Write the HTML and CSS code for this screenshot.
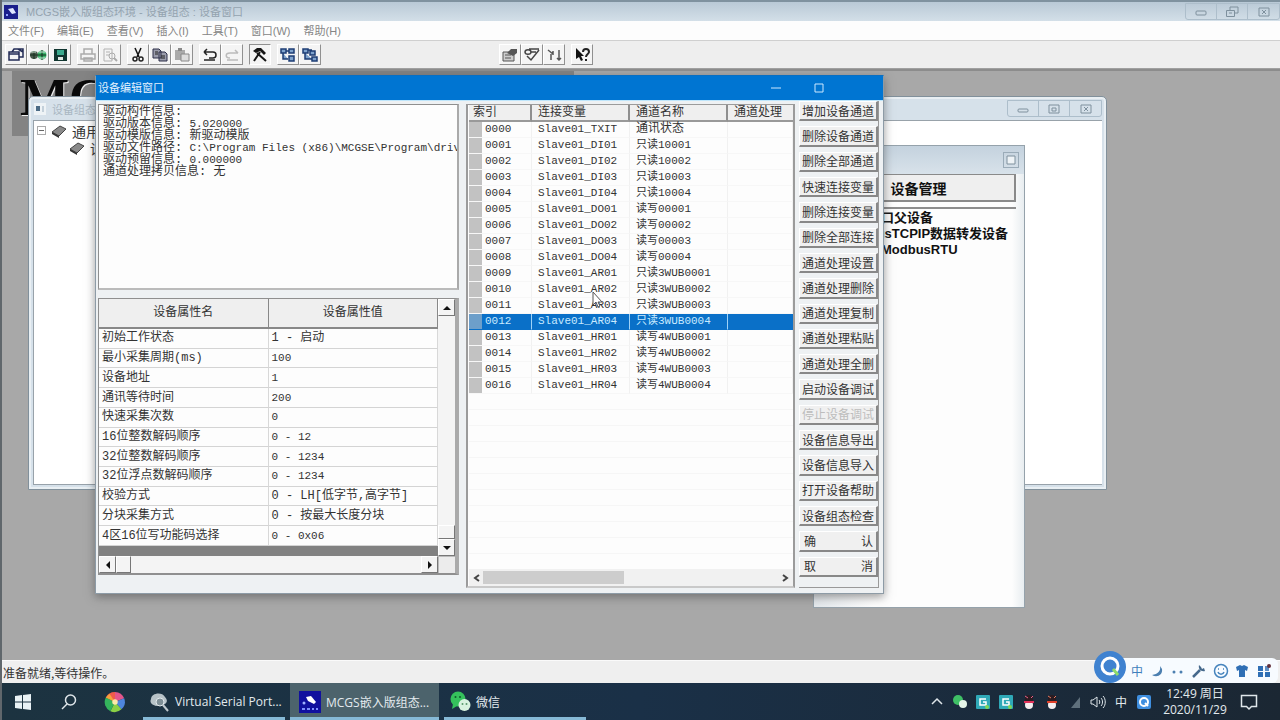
FILE: index.html
```html
<!DOCTYPE html>
<html lang="zh-CN">
<head>
<meta charset="utf-8">
<title>MCGS嵌入版组态环境</title>
<link rel="stylesheet" href="styles.css">
</head>
<body>
<div class="app">
  <header class="app-title">
    <svg class="app-logo" viewBox="0 0 14 14"><rect width="14" height="14" fill="#1a1f8c"/><path d="M4 4l5-1 3 5-4 1z" fill="#dfe6ff"/><rect x="2" y="9" width="2" height="2" fill="#8fa0ff"/></svg>
    <h1>MCGS嵌入版组态环境 - 设备组态 : 设备窗口</h1>
    <div class="caption-buttons">
      <button aria-label="最小化"><svg viewBox="0 0 14 12"><rect x="2" y="5" width="10" height="4" rx="1"/></svg></button>
      <button aria-label="还原"><svg viewBox="0 0 14 12"><path d="M5 4V1h8v6h-3M1.500 4.500h8v6h-8zM4 7h3"/></svg></button>
      <button aria-label="关闭"><svg viewBox="0 0 14 12"><path d="M2 2h10v8H2zM5 4l4 4M9 4L5 8"/></svg></button>
    </div>
  </header>

  <nav class="menu">
    <button>文件(F)</button><button>编辑(E)</button><button>查看(V)</button><button>插入(I)</button><button>工具(T)</button><button>窗口(W)</button><button>帮助(H)</button>
  </nav>

  <div class="toolbar">
    <div class="tool-group">
      <button aria-label="窗口"><svg viewBox="0 0 18 16"><path d="M2 5h10v8H2zM2 7h10M5 5l2-3h9v8h-4M11 2l5 3" fill="none" stroke="#222b55" stroke-width="1.500"/></svg></button>
      <button aria-label="下载"><svg viewBox="0 0 18 16"><circle cx="5" cy="8" r="4" fill="#4a5a4c"/><circle cx="13" cy="8" r="4.500" fill="#39b36a"/><path d="M1 8h16M5 4v8M13 3v10" stroke="#16301e"/><path d="M2 5h5M10 5h6M10 11h6" stroke="#d3eadb"/></svg></button>
      <button aria-label="保存"><svg viewBox="0 0 18 16"><path d="M3 2h13v12H3z" fill="#10352f"/><path d="M6 3h7v5H6z" fill="#3aa98d"/><path d="M7 10h5v3H7z" fill="#dfe8e4"/></svg></button>
    </div>
    <div class="tool-group">
      <button class="dim" aria-label="打印"><svg viewBox="0 0 18 16"><path d="M5 7V2h8v5M2 7h14v5H2zM5 11h8v3H5z" fill="none" stroke="#aaa" stroke-width="1.500"/></svg></button>
      <button class="dim" aria-label="预览"><svg viewBox="0 0 18 16"><path d="M3 2h8v12H3zM5 5h4M5 8h3" fill="none" stroke="#b2b2b2"/><circle cx="11" cy="9" r="3" fill="none" stroke="#aaa"/><path d="M13 11l3 3" stroke="#aaa" stroke-width="2"/></svg></button>
    </div>
    <div class="tool-group">
      <button aria-label="剪切"><svg viewBox="0 0 18 16"><path d="M6 1l4 9M12 1L8 10" stroke="#111" stroke-width="1.500"/><circle cx="6" cy="12" r="2" fill="none" stroke="#222" stroke-width="1.500"/><circle cx="12" cy="12" r="2" fill="none" stroke="#222" stroke-width="1.500"/></svg></button>
      <button aria-label="复制"><svg viewBox="0 0 18 16"><path d="M2 2h6l2 2v7H2zM8 5h6l2 2v7H8z" fill="#9a9cab" stroke="#2c2f48"/><path d="M4 5h3M4 7h3M10 9h4M10 11h4" stroke="#222"/></svg></button>
      <button class="dim" aria-label="粘贴"><svg viewBox="0 0 18 16"><path d="M2 3h10v10H2z" fill="#aaa"/><path d="M5 1h4v3H5z" fill="#888"/><path d="M8 7h8v7H8z" fill="#ddd" stroke="#888"/></svg></button>
    </div>
    <div class="tool-group">
      <button aria-label="撤消"><svg viewBox="0 0 18 16"><path d="M3 5h9c4 0 4 6 0 6H8M3 5l3-3M3 5l3 3M3 13h11" fill="none" stroke="#222" stroke-width="1.500"/></svg></button>
      <button class="dim" aria-label="重复"><svg viewBox="0 0 18 16"><path d="M15 6H7c-5 0-5 5 0 5M15 6l-3-3M4 13h11" fill="none" stroke="#bbb" stroke-width="1.500"/></svg></button>
    </div>
    <div class="tool-group">
      <button class="pressed" aria-label="工作台"><svg viewBox="0 0 18 16"><path d="M2 4l4-3h4l5 5-2 2-4-4-4 2z" fill="#151515"/><path d="M9 5L3 14M6 6l9 8" stroke="#151515" stroke-width="2"/></svg></button>
    </div>
    <div class="tool-group">
      <button aria-label="上移"><svg viewBox="0 0 18 16"><path d="M2 2h5v4H2zM10 2h5v4h-5zM10 9h5v5h-5zM4 6v6h5M7 4h3" fill="#7fa3cd" stroke="#1c3c74" stroke-width="1.500"/></svg></button>
      <button aria-label="下移"><svg viewBox="0 0 18 16"><path d="M2 2h5v4H2zM9 4h5v4H9zM11 10h5v4h-5zM4 6v6h7M7 3h4" fill="#7fa3cd" stroke="#1c3c74" stroke-width="1.500"/></svg></button>
    </div>
    <div class="tool-group tool-group-far">
      <button aria-label="属性"><svg viewBox="0 0 18 16"><path d="M2 5h11v9H2zM4 8h6M4 11h6" fill="#ccc" stroke="#555"/><path d="M6 6l4-4h6v4l-4 3z" fill="#555"/></svg></button>
      <button aria-label="检查"><svg viewBox="0 0 18 16"><path d="M2 5c0-3 6-3 6 0s-6 3-6 0M6 2h10M8 5h5M4 9l4 4 8-10" fill="none" stroke="#444" stroke-width="1.500"/></svg></button>
      <button aria-label="排序"><svg viewBox="0 0 18 16"><path d="M3 3l5 4M6 7v6M8 4v4M14 3v10M12 11l2 2 2-2" fill="none" stroke="#555" stroke-width="1.500"/></svg></button>
    </div>
    <div class="tool-group">
      <button aria-label="帮助"><svg viewBox="0 0 18 16"><path d="M3 1v11l3-2 2 4 2-1-2-4h3z" fill="#111"/><path d="M10 5c0-4 6-4 6 0 0 2-3 2-3 5M13 12v2" fill="none" stroke="#222" stroke-width="2"/></svg></button>
    </div>
  </div>

  <main class="workspace">
    <div class="banner">MCGS</div>

    <section class="child-window">
      <div class="child-title">
        <svg viewBox="0 0 12 12"><rect width="12" height="12" fill="#eef3f6"/><path d="M2 3h4v5H2z" fill="#4c6b85"/><path d="M8 3h2v6H8z" fill="#c3d0da"/></svg>
        <span>设备组态 : 设备窗口</span>
        <div class="caption-buttons">
          <button aria-label="最小化"><svg viewBox="0 0 14 12"><rect x="2" y="6" width="10" height="3" rx="1"/></svg></button>
          <button aria-label="最大化"><svg viewBox="0 0 14 12"><path d="M2 2h10v8H2zM5 5h4v3H5z"/></svg></button>
          <button aria-label="关闭"><svg viewBox="0 0 14 12"><path d="M2 2h10v8H2zM5 4l4 4M9 4L5 8"/></svg></button>
        </div>
      </div>
      <ul class="tree">
        <li><i class="expander"></i><svg viewBox="0 0 16 14"><path d="M1 8l8-6 6 3-7 7z" fill="#8a8a8a" stroke="#444"/><path d="M1 8l7 4v2L1 10z" fill="#333"/></svg>通用串口父设备</li>
        <li class="tree-child"><svg viewBox="0 0 16 14"><path d="M1 8l8-6 6 3-7 7z" fill="#8a8a8a" stroke="#444"/><path d="M1 8l7 4v2L1 10z" fill="#333"/></svg>设备0</li>
      </ul>
    </section>

    <section class="toolbox">
      <div class="toolbox-title"><button aria-label="关闭"><svg viewBox="0 0 14 14"><path d="M3 3h8v8H3z" fill="#eef3f6" stroke="#7e909d"/></svg></button></div>
      <button class="manage">设备管理</button>
      <ul class="devices"><li>通用串口父设备</li><li>ModbusTCPIP数据转发设备</li><li>莫迪康ModbusRTU</li></ul>
    </section>

    <section class="dialog">
      <div class="dialog-title">
        <h2>设备编辑窗口</h2>
        <button aria-label="最小化"><svg viewBox="0 0 12 12"><path d="M1 6h10"/></svg></button>
        <button aria-label="最大化"><svg viewBox="0 0 12 12"><path d="M2 2h8v8H2z"/></svg></button>
        <button class="close" aria-label="关闭"></button>
      </div>
      <div class="dialog-body">
        <div class="left">
          <div class="info">
            <p>驱动构件信息:</p>
            <p>驱动版本信息: <span class="mono">5.020000</span></p>
            <p>驱动模版信息: 新驱动模版</p>
            <p>驱动文件路径: <span class="mono">C:\Program Files (x86)\MCGSE\Program\driv</span></p>
            <p>驱动预留信息: <span class="mono">0.000000</span></p>
            <p>通道处理拷贝信息: 无</p>
          </div>
          <div class="props">
            <div class="props-view">
              <table class="props-table">
                <thead><tr><th>设备属性名</th><th>设备属性值</th></tr></thead>
                <tbody>
                  <tr><td>初始工作状态</td><td>1 - 启动</td></tr>
                  <tr><td>最小采集周期(ms)</td><td class="mono">100</td></tr>
                  <tr><td>设备地址</td><td class="mono">1</td></tr>
                  <tr><td>通讯等待时间</td><td class="mono">200</td></tr>
                  <tr><td>快速采集次数</td><td class="mono">0</td></tr>
                  <tr><td>16位整数解码顺序</td><td class="mono">0 - 12</td></tr>
                  <tr><td>32位整数解码顺序</td><td class="mono">0 - 1234</td></tr>
                  <tr><td>32位浮点数解码顺序</td><td class="mono">0 - 1234</td></tr>
                  <tr><td>校验方式</td><td>0 - LH[低字节,高字节]</td></tr>
                  <tr><td>分块采集方式</td><td>0 - 按最大长度分块</td></tr>
                  <tr><td>4区16位写功能码选择</td><td class="mono">0 - 0x06</td></tr>
                </tbody>
              </table>
            </div>
            <div class="vscroll">
              <button aria-label="向上"><svg viewBox="0 0 8 8"><path d="M0 6h8L4 2z"/></svg></button>
              <i class="vthumb"></i>
              <button aria-label="向下"><svg viewBox="0 0 8 8"><path d="M0 2h8L4 6z"/></svg></button>
            </div>
            <div class="hscroll">
              <button aria-label="向左"><svg viewBox="0 0 8 8"><path d="M6 0v8L2 4z"/></svg></button>
              <i class="hthumb"></i>
              <button aria-label="向右"><svg viewBox="0 0 8 8"><path d="M2 0v8l4-4z"/></svg></button>
            </div>
            <i class="corner"></i>
          </div>
        </div>

        <div class="channels">
          <table class="channel-table">
            <thead><tr><th class="c1">索引</th><th class="c2">连接变量</th><th class="c3">通道名称</th><th>通道处理</th></tr></thead>
            <tbody>
              <tr><td>0000</td><td>Slave01_TXIT</td><td class="zh">通讯状态</td><td></td></tr>
              <tr><td>0001</td><td>Slave01_DI01</td><td>只读10001</td><td></td></tr>
              <tr><td>0002</td><td>Slave01_DI02</td><td>只读10002</td><td></td></tr>
              <tr><td>0003</td><td>Slave01_DI03</td><td>只读10003</td><td></td></tr>
              <tr><td>0004</td><td>Slave01_DI04</td><td>只读10004</td><td></td></tr>
              <tr><td>0005</td><td>Slave01_DO01</td><td>读写00001</td><td></td></tr>
              <tr><td>0006</td><td>Slave01_DO02</td><td>读写00002</td><td></td></tr>
              <tr><td>0007</td><td>Slave01_DO03</td><td>读写00003</td><td></td></tr>
              <tr><td>0008</td><td>Slave01_DO04</td><td>读写00004</td><td></td></tr>
              <tr><td>0009</td><td>Slave01_AR01</td><td>只读3WUB0001</td><td></td></tr>
              <tr><td>0010</td><td>Slave01_AR02</td><td>只读3WUB0002</td><td></td></tr>
              <tr><td>0011</td><td>Slave01_AR03</td><td>只读3WUB0003</td><td></td></tr>
              <tr class="selected"><td>0012</td><td>Slave01_AR04</td><td>只读3WUB0004</td><td></td></tr>
              <tr><td>0013</td><td>Slave01_HR01</td><td>读写4WUB0001</td><td></td></tr>
              <tr><td>0014</td><td>Slave01_HR02</td><td>读写4WUB0002</td><td></td></tr>
              <tr><td>0015</td><td>Slave01_HR03</td><td>读写4WUB0003</td><td></td></tr>
              <tr><td>0016</td><td>Slave01_HR04</td><td>读写4WUB0004</td><td></td></tr>
            </tbody>
          </table>
          <div class="grid-fill"></div>
          <div class="list-scroll">
            <button aria-label="向左"><svg viewBox="0 0 8 8"><path d="M6 1L2 4l4 3"/></svg></button>
            <i></i>
            <button aria-label="向右"><svg viewBox="0 0 8 8"><path d="M2 1l4 3-4 3"/></svg></button>
          </div>
        </div>

        <div class="actions">
          <button>增加设备通道</button>
          <button>删除设备通道</button>
          <button>删除全部通道</button>
          <button>快速连接变量</button>
          <button>删除连接变量</button>
          <button>删除全部连接</button>
          <button>通道处理设置</button>
          <button>通道处理删除</button>
          <button>通道处理复制</button>
          <button>通道处理粘贴</button>
          <button>通道处理全删</button>
          <button>启动设备调试</button>
          <button disabled>停止设备调试</button>
          <button>设备信息导出</button>
          <button>设备信息导入</button>
          <button>打开设备帮助</button>
          <button>设备组态检查</button>
          <button class="spread"><span>确</span><span>认</span></button>
          <button class="spread"><span>取</span><span>消</span></button>
        </div>
      </div>
      <svg class="pointer" viewBox="0 0 12 18"><path d="M1 1v13l3-3 2 5 2-1-2-4h4z" fill="#fff" stroke="#555"/></svg>
    </section>
  </main>

  <footer class="status">准备就绪,等待操作。</footer>

  <div class="taskbar">
    <button class="task-icon" aria-label="开始"><svg viewBox="0 0 16 16"><path d="M0 2l7-1v6.500H0zM8 1l8-1v7.500H8zM0 8.500h7V15l-7-1zM8 8.500h8V16l-8-1z" fill="#e9f2f5"/></svg></button>
    <button class="task-icon" aria-label="搜索"><svg viewBox="0 0 16 16"><circle cx="9.500" cy="6" r="5" fill="none" stroke="#dfe6ea" stroke-width="1.500"/><path d="M6 10l-5 5" stroke="#dfe6ea" stroke-width="1.500"/></svg></button>
    <button class="task-icon" aria-label="浏览器"><svg class="big" viewBox="0 0 24 24"><path d="M12 12V1a11 11 0 0 1 10 7z" fill="#e2558b"/><path d="M12 12L2 7a11 11 0 0 1 10-6z" fill="#ef5b4b"/><path d="M12 12l10-4a11 11 0 0 1-3 12z" fill="#4e86dd"/><path d="M12 12l7 8a11 11 0 0 1-12 2z" fill="#8bd046"/><path d="M12 12L7 22A11 11 0 0 1 2 7z" fill="#34b45c"/><path d="M12 12l-10-5 4-4z" fill="#f6a23b"/><circle cx="12" cy="12" r="3" fill="#fbe9a8"/></svg></button>
    <button class="task"><svg viewBox="0 0 22 22"><path d="M3 8c0-6 11-8 14-2 5 5-1 9-5 8l-4 1C5 14 1 12 3 8z" fill="#b7c3c8"/><circle cx="12" cy="11" r="4" fill="#7f9097" stroke="#e3eaed"/><path d="M15 14l5 6" stroke="#bfc9ce" stroke-width="2"/></svg><span>Virtual Serial Port...</span></button>
    <button class="task active"><svg viewBox="0 0 22 22"><rect width="22" height="22" fill="#10109e"/><path d="M7 6l5-1 5 6-2 2-6-3z" fill="#fff"/><circle cx="5" cy="12" r="1.500" fill="#9fb0ff"/><path d="M3 18h3M8 18h3M13 18h2M17 18h2" stroke="#7e90ff" stroke-width="2"/></svg><span>MCGS嵌入版组态...</span></button>
    <button class="task"><svg viewBox="0 0 22 22"><circle cx="9" cy="8" r="7.500" fill="#35c15c"/><path d="M4 13l-1 5 5-3z" fill="#35c15c"/><circle cx="6.500" cy="6" r="1" fill="#0c5a28"/><circle cx="11" cy="6" r="1" fill="#0c5a28"/><circle cx="15.500" cy="14" r="6" fill="#d8f3df"/><circle cx="13.500" cy="13" r="1" fill="#5a9a6c"/><circle cx="17.500" cy="13" r="1" fill="#5a9a6c"/></svg><span>微信</span></button>
    <div class="tray">
      <svg viewBox="0 0 16 16"><path d="M3 10l5-5 5 5" fill="none" stroke="#dfe6ea" stroke-width="1.500"/></svg>
      <svg viewBox="0 0 16 16"><circle cx="6" cy="6" r="5" fill="#3fc066"/><circle cx="11" cy="10" r="4" fill="#e5f5e9"/></svg>
      <svg viewBox="0 0 16 16"><rect x="1" y="1" width="14" height="14" rx="1" fill="#2fa9b8"/><path d="M11 5H5v6h6V8H8" fill="none" stroke="#fff" stroke-width="1.500"/><circle cx="12" cy="13" r="2" fill="#7ed957"/></svg>
      <svg viewBox="0 0 16 16"><rect x="1" y="1" width="14" height="14" rx="1" fill="#2fa9b8"/><path d="M11 5H5v6h6V8H8" fill="none" stroke="#fff" stroke-width="1.500"/><circle cx="12" cy="13" r="2" fill="#7ed957"/></svg>
      <svg viewBox="0 0 16 16"><circle cx="8" cy="5" r="4" fill="#2b1c22"/><ellipse cx="8" cy="11" rx="4" ry="4" fill="#f5eef0"/><path d="M3 8h10" stroke="#e1305a" stroke-width="2"/><path d="M4 2l3 2M12 2l-2 2" stroke="#e85f86"/></svg>
      <svg viewBox="0 0 16 16"><circle cx="8" cy="5" r="4" fill="#2b1c22"/><ellipse cx="8" cy="11" rx="4" ry="4" fill="#f5eef0"/><path d="M3 8h10" stroke="#e1402a" stroke-width="2"/><path d="M4 2l3 2M12 2l-2 2" stroke="#e87a5f"/></svg>
      <svg viewBox="0 0 16 16"><path d="M4 14L13 3v11z" fill="#5f707c"/></svg>
      <svg viewBox="0 0 16 16"><path d="M1 6h2l4-3v10L3 10H1zM9 6c1 1 1 3 0 4M11 4c2 2 2 6 0 8M13 2c3 3 3 9 0 12" fill="none" stroke="#dfe6ea"/></svg>
      <span>中</span>
      <svg viewBox="0 0 16 16"><rect x="1" y="1" width="14" height="14" rx="2" fill="#3f8fe0"/><circle cx="8" cy="8" r="4" fill="none" stroke="#fff" stroke-width="2"/><path d="M9 9l3 3" stroke="#fff" stroke-width="2"/></svg>
    </div>
    <div class="clock"><span>12:49 周日</span><span>2020/11/29</span></div>
    <button class="notice" aria-label="通知"><svg viewBox="0 0 18 18"><path d="M1.500 2.500h15v11h-5L9 16l-2.500-2.500h-5z" fill="none" stroke="#dfe6ea" stroke-width="1.500"/></svg></button>
  </div>

  <div class="ime">
    <svg class="ime-logo" viewBox="0 0 32 32"><circle cx="16" cy="16" r="16" fill="#3f82d0"/><circle cx="16" cy="15" r="8" fill="none" stroke="#fff" stroke-width="3"/><path d="M19 18l5 6" stroke="#8fdc6a" stroke-width="3"/></svg>
    <span>中</span>
    <svg viewBox="0 0 16 16"><path d="M11 3c1 5-2 8-8 9 5 3 11 0 10-6z" fill="#4c7fb0"/></svg>
    <svg viewBox="0 0 16 16"><circle cx="4" cy="9" r="1.500" fill="#4c7fb0"/><circle cx="11" cy="9" r="1.500" fill="#4c7fb0"/></svg>
    <svg viewBox="0 0 16 16"><path d="M2 14l7-7" stroke="#46698c" stroke-width="2.500"/><path d="M8 2c-1 4 2 7 6 6l-1-3-2 1-1-2z" fill="#46698c"/></svg>
    <svg viewBox="0 0 16 16"><circle cx="8" cy="8" r="6.500" fill="none" stroke="#4684bd" stroke-width="1.500"/><path d="M5 9c1 3 5 3 6 0M5 6h1M10 6h1" fill="none" stroke="#4684bd" stroke-width="1.500"/></svg>
    <svg viewBox="0 0 16 16"><path d="M2 4l4-2 2 1 2-1 4 2-1 4-2-1v7H5V7L3 8z" fill="#2f6fb5"/></svg>
    <svg viewBox="0 0 16 16"><path d="M2 3h5v5H2zM2 9h5v5H2zM9 9h5v5H9z" fill="#2f6fb5"/><path d="M9 3h4v5H9z" fill="#5f8fc4"/><circle cx="13" cy="3" r="2" fill="#632f3a"/></svg>
  </div>
</div>
</body>
</html>
```
FILE: styles.css
```css
* { box-sizing: border-box; }
body, h1, h2, p, ul { margin: 0; padding: 0; font-weight: normal; }
body { font: 12px "Liberation Sans", "Noto Sans CJK SC", sans-serif; color: #333; }
ul { list-style: none; }
svg { display: block; flex: none; }
button { font: inherit; color: inherit; border: 0; padding: 0; margin: 0; background: none; flex: none; }

.app { position: relative; display: flex; flex-direction: column; height: 100vh; overflow: hidden; border-left: 2px solid #60676c; }

.app-title { display: flex; align-items: center; flex: none; height: 21px; padding-left: 2px; border-top: 2px solid #7f929f; background: linear-gradient(#b9c9d6, #d3dfe8); }
.app-logo { width: 14px; height: 14px; }
.app-title h1 { flex: 1; margin-left: 8px; font-size: 11px; line-height: 18px; color: #94a3af; white-space: nowrap; }
.caption-buttons { display: flex; margin-left: auto; height: 17px; border: 1px solid #adbecb; border-radius: 0 0 3px 3px; }
.caption-buttons button { width: 31px; display: flex; align-items: center; justify-content: center; border-right: 1px solid #adbecb; }
.caption-buttons button:last-child { border-right: 0; }
.caption-buttons svg { width: 14px; height: 12px; fill: none; stroke: #7e909d; }

.menu { display: flex; flex: none; gap: 13px; height: 20px; padding-left: 6px; background: #fdfdfd; border-bottom: 1px solid #cfcfcf; font-size: 11px; line-height: 18px; color: #858585; }

.toolbar { display: flex; align-items: center; flex: none; gap: 6px; height: 28px; padding-left: 3px; background: #eee; border-bottom: 1px solid #a0a0a0; }
.tool-group { display: flex; }
.tool-group-far { margin-left: 172px; }
.toolbar button { width: 22px; height: 21px; display: flex; align-items: center; justify-content: center; background: #f4f4f4; border: 1px solid #fff; border-right-color: #909090; border-bottom-color: #909090; }
.toolbar .pressed { border-color: #909090 #fff #fff #909090; }
.toolbar svg { width: 18px; height: 16px; }

.workspace { position: relative; flex: 1; min-height: 0; overflow: hidden; background: #a8a8a8; border-top: 2px solid #8c8c8c; }
.banner { position: absolute; left: 10px; top: 0; width: 562px; height: 65px; padding-left: 8px; background: #838383; font: bold 52px/54px "Liberation Serif", serif; color: #0a0a0a; text-shadow: 1px 1px #eee; }

.child-window { position: absolute; left: 26px; top: 25px; right: 173px; height: 394px; display: flex; flex-direction: column; padding: 0 4px 4px; background: #d6e1ea; border: 1px solid #81909b; border-radius: 5px 5px 0 0; box-shadow: inset 0 0 0 2px #e9eff3; }
.child-title { display: flex; align-items: center; flex: none; gap: 6px; height: 23px; padding-left: 1px; font-size: 11px; color: #a9b7c2; }
.child-title > svg { width: 12px; height: 12px; }
.tree { flex: 1; background: #fff; border: 1px solid #98a2aa; border-right: 0; padding: 1px 0 0 3px; font-size: 14px; }
.tree li { display: flex; align-items: center; gap: 5px; height: 17px; white-space: nowrap; }
.tree svg { width: 16px; height: 14px; }
.tree .tree-child { padding-left: 32px; }
.expander { width: 9px; height: 9px; border: 1px solid #aaa; background: linear-gradient(#666, #666) center / 5px 1px no-repeat; }

.toolbox { position: absolute; left: 811px; top: 74px; right: 255px; height: 463px; padding: 0 8px; background: linear-gradient(90deg, #e3e8ec, #fdfdfd 60px calc(100% - 12px), #e8edf0); border: 1px solid #95a2ab; }
.toolbox-title { display: flex; align-items: center; justify-content: flex-end; height: 28px; margin: 0 -8px; padding-right: 5px; background: linear-gradient(#c4d2de, #d8e2ea); }
.toolbox-title button { border: 1px solid #9aabb8; }
.toolbox-title svg { width: 14px; height: 14px; }
.manage { display: block; width: 100%; height: 28px; border: 1px solid #8a8a8a; border-right-width: 2px; border-bottom-width: 2px; background: #efefef; font-size: 14px; font-weight: bold; color: #111; }
.devices { margin-top: 5px; padding: 1px 0 0 20px; border-top: 2px solid #8d8d8d; font-size: 13px; font-weight: bold; line-height: 16px; color: #111; white-space: nowrap; }

.dialog { position: absolute; left: 93px; top: 4px; right: 396px; height: 519px; display: flex; flex-direction: column; background: #eef1f3; border: 1px solid #8d9ba6; border-top-color: #0a6fc2; box-shadow: 0 3px 9px #4448; }
.dialog-title { display: flex; align-items: center; flex: none; height: 24px; background: #0075d2; color: #e4f2ff; }
.dialog-title h2 { flex: 1; padding-left: 2px; font-size: 11px; line-height: 24px; }
.dialog-title button { width: 43px; display: flex; justify-content: center; }
.dialog-title svg { width: 12px; height: 12px; fill: none; stroke: #cde9ff; }
.dialog-body { display: flex; flex: 1; min-height: 0; padding: 3px 4px 5px 2px; border-top: 1px solid #bfe6fb; font-family: "Liberation Mono", "Noto Sans CJK SC", monospace; }
.mono { font-size: 11px; }

.left { display: flex; flex-direction: column; gap: 8px; flex: none; width: 361px; padding-bottom: 13px; }
.info { flex: none; height: 186px; padding: 1px 0 0 4px; overflow: hidden; background: #fdfdfd; border: 1px solid #8f8f8f; border-right: 2px solid #aaa; border-bottom: 2px solid #bbb; }
.info p { line-height: 12px; white-space: nowrap; }

.props { flex: 1; min-height: 0; display: grid; grid-template: minmax(0, 1fr) 17px / minmax(0, 1fr) 17px; border: 1px solid #8f8f8f; border-right: 4px solid #aaa; border-bottom-width: 2px; background: #f4f4f4; }
.props-view { padding-bottom: 10px; background: #818181; min-height: 0; }
.props-table { width: 100%; height: 100%; table-layout: fixed; border-collapse: separate; border-spacing: 0; background: #fdfdfd; }
.props-table th { height: 30px; padding: 0; line-height: 16px; font-weight: normal; background: #efefef; border-right: 1px solid #888; border-bottom: 2px solid #888; }
.props-table td { padding: 0 3px; line-height: 14px; border-right: 1px solid #d8d8d8; border-bottom: 1px solid #d4d4d4; white-space: nowrap; }
.vscroll, .hscroll { display: flex; justify-content: space-between; }
.vscroll { flex-direction: column; }
.hscroll { justify-content: flex-start; }
.vscroll button, .hscroll button { width: 17px; height: 17px; display: flex; align-items: center; justify-content: center; background: #f4f4f4; border: 1px solid #fff; border-right-color: #777; border-bottom-color: #777; }
.vscroll svg, .hscroll svg { width: 8px; height: 8px; fill: #111; }
.vthumb { margin-top: auto; height: 14px; border: 1px solid #fff; border-right-color: #777; border-bottom-color: #777; }
.hthumb { width: 15px; margin-right: auto; border: 1px solid #fff; border-right-color: #777; border-bottom-color: #777; }
.corner { background: #ececec; border: 1px solid #bbb; border-width: 1px 0 0 1px; }

.channels { flex: 1; min-width: 0; display: flex; flex-direction: column; margin-left: 7px; padding-left: 1px; background: #fdfdfd; border: 2px solid #9b9b9b; border-top-width: 1px; border-bottom-color: #c9c9c9; }
.channel-table { width: 100%; table-layout: fixed; border-spacing: 0; font-size: 11px; }
.c1 { width: 63px; }
.c2 { width: 98px; }
.c3 { width: 98px; }
.channel-table th { height: 17px; padding: 0 0 0 6px; font-size: 12px; line-height: 14px; font-weight: normal; text-align: left; background: #efefef; border-right: 2px solid #8f8f8f; border-bottom: 2px solid #999; }
.channel-table th:first-child { padding-left: 4px; }
.channel-table th:last-child { border-right: 0; }
.channel-table td { height: 16px; padding: 0 0 0 6px; line-height: 15px; white-space: nowrap; border-right: 1px solid #f1f1f1; border-bottom: 1px solid #f7f7f7; }
.channel-table td:first-child { padding-left: 16px; background: linear-gradient(90deg, #c2c2c2 13px, transparent 13px); }
.channel-table .zh { font-size: 12px; }
.channel-table .selected td { background: #0a70c8; color: #c8eaff; border-color: #9fd2f7; border-bottom-color: #0a70c8; }
.channel-table .selected td:first-child { background: linear-gradient(90deg, #6d9fca 13px, #0a70c8 13px); }
.channel-table .selected td:last-child { border-right: 0; }
.grid-fill { flex: 1; background: repeating-linear-gradient(#fdfdfd 0 15px, #f6f6f6 15px 16px); }
.list-scroll { display: flex; flex: none; height: 17px; padding: 0 2px; background: #f1f1f1; }
.list-scroll i { width: 141px; margin: 2px auto 2px 0; background: #cdcdcd; }
.list-scroll button { width: 12px; display: flex; align-items: center; justify-content: center; }
.list-scroll svg { width: 8px; height: 8px; fill: none; stroke: #444; stroke-width: 2; }

.actions { flex: none; width: 80px; margin: -3px 0 0 4px; padding-bottom: 10px; display: grid; grid-auto-rows: 1fr; gap: 5px; border-right: 1px solid #999; border-bottom: 1px solid #999; font-family: "Noto Sans CJK SC", sans-serif; }
.actions button { min-height: 0; line-height: 16px; background: #f0f0f0; border: 1px solid #fff; border-right: 2px solid #888; border-bottom: 2px solid #888; white-space: nowrap; }
.actions button:disabled { color: #bdbdbd; }
.actions .spread { display: flex; align-items: center; justify-content: space-between; padding: 0 3px 0 4px; }
.pointer { position: absolute; left: 496px; top: 215px; width: 12px; height: 18px; }

.status { flex: none; height: 23px; padding-left: 1px; background: #efefef; border-top: 1px solid #fafafa; font-family: "Noto Sans CJK SC", sans-serif; font-size: 12px; line-height: 23px; }

.taskbar { display: flex; flex: none; height: 37px; margin-left: -2px; background: linear-gradient(90deg, #1c3340, #1a3047 50%, #1b2733); color: #e3eaee; }
.task-icon { width: 46px; display: flex; align-items: center; justify-content: center; }
.task-icon svg { width: 16px; height: 16px; }
.task-icon .big { width: 22px; height: 24px; }
.task { display: flex; align-items: center; gap: 5px; width: 142px; margin-left: 5px; padding-left: 5px; border-bottom: 3px solid #86b9d6; border-top: 3px solid transparent; white-space: nowrap; font-family: "Open Sans", "Noto Sans CJK SC", sans-serif; }
.task.active { width: 149px; padding-left: 9px; background: #4c636c; }
.task svg { width: 22px; height: 22px; }
.tray { display: flex; align-items: center; gap: 7px; margin-left: auto; }
.tray svg { width: 16px; height: 16px; }
.tray span { width: 16px; text-align: center; }
.clock { display: flex; flex-direction: column; justify-content: center; align-items: center; width: 86px; font: 12px/16px "Open Sans", "Noto Sans CJK SC", sans-serif; }
.notice { width: 42px; display: flex; align-items: center; }
.notice svg { width: 18px; height: 18px; margin-left: 2px; }

.ime { position: absolute; right: 2px; bottom: 37px; height: 25px; width: 168px; display: flex; align-items: center; justify-content: space-between; padding: 0 6px 0 21px; background: #f7fbff; border-radius: 0 6px 6px 0; color: #3f7fbc; }
.ime svg { width: 16px; height: 16px; }
.ime .ime-logo { position: absolute; left: -16px; bottom: 0; width: 32px; height: 32px; }
```
